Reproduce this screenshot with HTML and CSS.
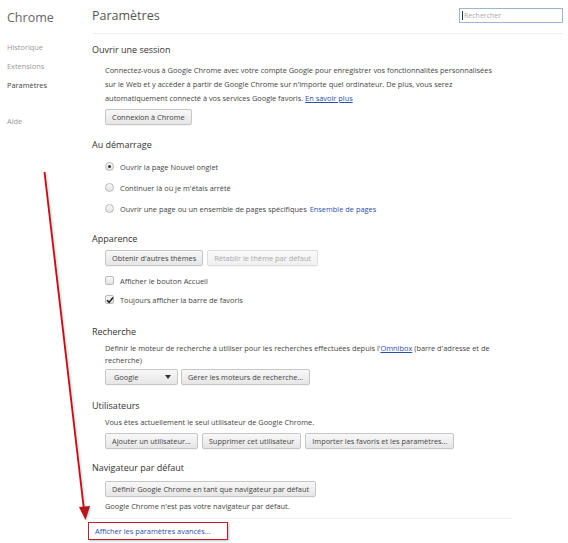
FILE: index.html
```html
<!DOCTYPE html>
<html lang="fr">
<head>
<meta charset="utf-8">
<title>Paramètres</title>
<link rel="stylesheet" href="styles.css">
</head>
<body>
<div class="page">
  <nav class="sidebar">
    <div class="brand">Chrome</div>
    <ul class="nav">
      <li class="nav-item">Historique</li>
      <li class="nav-item">Extensions</li>
      <li class="nav-item active">Paramètres</li>
      <li class="nav-item help">Aide</li>
    </ul>
  </nav>
  <main class="main">
    <header class="header">
      <h1 class="title">Paramètres</h1>
      <div class="search"><span class="caret"></span>Rechercher</div>
    </header>

    <section class="section s-session">
      <h2 class="sec-title">Ouvrir une session</h2>
      <div class="sec-body">
        <p class="para">Connectez-vous à Google Chrome avec votre compte Google pour enregistrer vos fonctionnalités personnalisées sur le Web et y accéder à partir de Google Chrome sur n'importe quel ordinateur. De plus, vous serez automatiquement connecté à vos services Google favoris. <a class="link ul">En savoir plus</a></p>
        <div class="btns b-session"><span class="btn">Connexion à Chrome</span></div>
      </div>
    </section>

    <section class="section s-start">
      <h2 class="sec-title">Au démarrage</h2>
      <div class="sec-body">
        <div class="opt radio-row"><span class="radio on"></span>Ouvrir la page Nouvel onglet</div>
        <div class="opt radio-row"><span class="radio"></span>Continuer là où je m'étais arrêté</div>
        <div class="opt radio-row"><span class="radio"></span>Ouvrir une page ou un ensemble de pages spécifiques <a class="link plain">Ensemble de pages</a></div>
      </div>
    </section>

    <section class="section s-look">
      <h2 class="sec-title">Apparence</h2>
      <div class="sec-body">
        <div class="btns b-look"><span class="btn">Obtenir d'autres thèmes</span><span class="btn disabled">Rétablir le thème par défaut</span></div>
        <div class="checks">
          <div class="opt check-row"><span class="check"></span>Afficher le bouton Accueil</div>
          <div class="opt check-row"><span class="check on"><svg viewBox="0 0 10 10" class="tick"><path d="M2 5.2 L4.1 7.4 L8 2.4" fill="none" stroke="#222" stroke-width="1.6"/></svg></span>Toujours afficher la barre de favoris</div>
        </div>
      </div>
    </section>

    <section class="section s-search">
      <h2 class="sec-title">Recherche</h2>
      <div class="sec-body">
        <p class="para small">Définir le moteur de recherche à utiliser pour les recherches effectuées depuis l'<a class="link ul">Omnibox</a> (barre d'adresse et de recherche)</p>
        <div class="btns b-search"><span class="btn select">Google<span class="arrow"></span></span><span class="btn">Gérer les moteurs de recherche...</span></div>
      </div>
    </section>

    <section class="section s-users">
      <h2 class="sec-title">Utilisateurs</h2>
      <div class="sec-body">
        <p class="para small">Vous êtes actuellement le seul utilisateur de Google Chrome.</p>
        <div class="btns b-users"><span class="btn">Ajouter un utilisateur...</span><span class="btn">Supprimer cet utilisateur</span><span class="btn">Importer les favoris et les paramètres...</span></div>
      </div>
    </section>

    <section class="section s-default">
      <h2 class="sec-title">Navigateur par défaut</h2>
      <div class="sec-body">
        <div class="btns b-default"><span class="btn">Définir Google Chrome en tant que navigateur par défaut</span></div>
        <p class="para small note">Google Chrome n'est pas votre navigateur par défaut.</p>
      </div>
    </section>

    <footer class="footer">
      <a class="link adv">Afficher les paramètres avancés...</a>
    </footer>
  </main>
</div>
<svg class="annot" width="568" height="543" viewBox="0 0 568 543">
  <defs>
    <filter id="sh" x="-20%" y="-5%" width="140%" height="110%">
      <feDropShadow dx="1" dy="1" stdDeviation="1" flood-color="#000" flood-opacity="0.25"/>
    </filter>
  </defs>
  <g filter="url(#sh)">
    <line x1="44.5" y1="172" x2="84" y2="510" stroke="#b5121b" stroke-width="1.8"/>
    <polygon points="79,507 90,506 85.5,520" fill="#b5121b"/>
  </g>
</svg>
</body>
</html>
```
FILE: styles.css
```css
html, body {
  margin: 0;
  padding: 0;
  background: #fff;
}
body {
  font-family: "Open Sans", "Noto Sans", sans-serif;
  font-size: 7.4px;
  color: #333;
  width: 568px;
  height: 543px;
  overflow: hidden;
  position: relative;
}
.page {
  display: flex;
}
.sidebar {
  width: 92px;
  flex: none;
  box-sizing: border-box;
  padding: 10px 0 0 7px;
}
.brand {
  font-size: 12.5px;
  color: #666;
  line-height: 16px;
}
.nav {
  list-style: none;
  margin: 0;
  padding: 0;
}
.nav-item {
  color: #999;
  line-height: 19px;
  height: 19px;
}
.nav-item:first-child {
  margin-top: 12px;
}
.nav-item.active {
  color: #444;
}
.nav-item.help {
  margin-top: 17px;
}
.main {
  flex: 1;
  padding-right: 5px;
}
.header {
  display: flex;
  justify-content: space-between;
  align-items: center;
  height: 34px;
  box-sizing: border-box;
  border-bottom: 1px solid #eee;
  padding-bottom: 1px;
}
.title {
  margin: 0;
  font-size: 12.5px;
  font-weight: normal;
  color: #555;
  line-height: 16px;
}
.search {
  width: 104px;
  height: 15px;
  box-sizing: border-box;
  border: 1px solid #9ab5da;
  color: #aaa;
  font-size: 7px;
  line-height: 13px;
  padding-left: 2px;
  display: flex;
  align-items: center;
  margin-top: -1px;
}
.caret {
  display: inline-block;
  width: 1px;
  height: 9px;
  background: #333;
  margin-right: 1px;
}
.section {
  margin-top: 13px;
}
.s-session {
  margin-top: 9px;
}
.sec-title {
  margin: 0;
  font-size: 9px;
  font-weight: normal;
  color: #333;
  line-height: 14px;
}
.sec-body {
  padding-left: 13px;
}
.para {
  margin: 6px 0 0;
  line-height: 14px;
  color: #444;
  width: 392px;
}
.para.small {
  line-height: 12px;
  margin-top: 3px;
}
.link {
  color: #2a50a8;
}
.link.ul {
  text-decoration: underline;
}
.btns {
  display: flex;
  gap: 4px;
  margin-top: 4px;
}
.btn {
  display: inline-flex;
  align-items: center;
  height: 16px;
  box-sizing: border-box;
  padding: 0 6px;
  border: 1px solid #c6c6c6;
  border-radius: 2px;
  background: linear-gradient(#f8f8f8, #e6e6e6);
  color: #444;
  white-space: nowrap;
  box-shadow: 0 1px 0 rgba(0,0,0,0.04);
}
.btn.disabled {
  color: #aaa;
  border-color: #ddd;
  background: linear-gradient(#fafafa, #f0f0f0);
}
.btn.select {
  width: 73px;
  justify-content: space-between;
  padding-left: 8px;
  padding-right: 6px;
}
.arrow {
  width: 0;
  height: 0;
  border-left: 3px solid transparent;
  border-right: 3px solid transparent;
  border-top: 4px solid #333;
}
.opt {
  display: flex;
  align-items: center;
  color: #444;
  white-space: nowrap;
}
.radio-row {
  height: 21px;
}
.radio-row:first-child {
  margin-top: 4px;
}
.radio {
  width: 9px;
  height: 9px;
  box-sizing: border-box;
  border-radius: 50%;
  border: 1px solid #b8b8b8;
  background: linear-gradient(#fafafa, #e2e2e2);
  margin-right: 6px;
  display: inline-flex;
  align-items: center;
  justify-content: center;
}
.radio.on::after {
  content: "";
  width: 3px;
  height: 3px;
  border-radius: 50%;
  background: #333;
}
.plain {
  margin-left: 3px;
}
.checks {
  margin-top: 5px;
}
.check-row {
  height: 19px;
}
.check {
  width: 9px;
  height: 9px;
  box-sizing: border-box;
  border: 1px solid #bbb;
  border-radius: 2px;
  background: linear-gradient(#fafafa, #e2e2e2);
  margin-right: 6px;
  position: relative;
}
.tick {
  position: absolute;
  left: -1px;
  top: -1px;
  width: 10px;
  height: 10px;
}
.b-look {
  margin-top: 4px;
}
.s-search {
  margin-top: 16px;
}
.b-search {
  margin-top: 3px;
  gap: 3px;
}
.s-users {
  margin-top: 14px;
}
.b-users {
  margin-top: 5px;
}
.s-default {
  margin-top: 12px;
}
.b-default {
  margin-top: 6px;
}
.note {
  margin-top: 3px;
}
.footer {
  margin-top: 6px;
  border-top: 1px solid #eee;
  width: 420px;
  padding-top: 3px;
}
.adv {
  display: block;
  margin-left: -4px;
  width: 140px;
  height: 18px;
  box-sizing: border-box;
  border: 1px solid #c0202c;
  padding-left: 6px;
  line-height: 16px;
  color: #2a50a8;
  box-shadow: 1px 1px 2px rgba(0,0,0,0.25);
}
.annot {
  position: absolute;
  left: 0;
  top: 0;
  pointer-events: none;
}
```
